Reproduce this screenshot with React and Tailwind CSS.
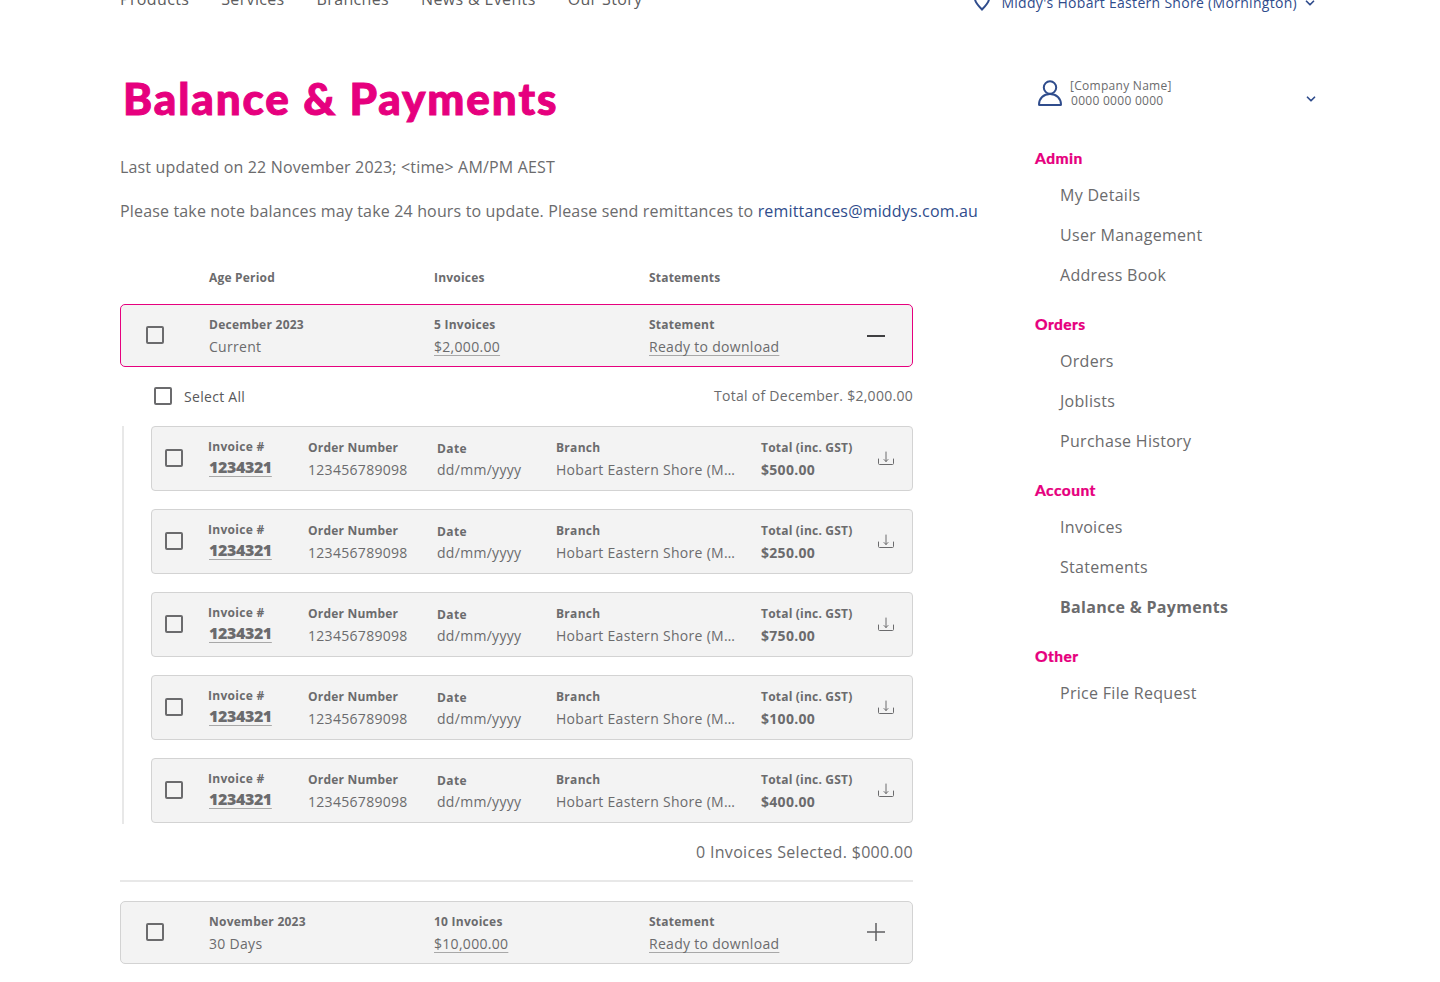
import { ChevronDown } from 'lucide-react';

const invoices = ['$500.00', '$250.00', '$750.00', '$100.00', '$400.00'];

const menu = [
  { title: 'Admin', items: ['My Details', 'User Management', 'Address Book'] },
  { title: 'Orders', items: ['Orders', 'Joblists', 'Purchase History'] },
  { title: 'Account', items: ['Invoices', 'Statements', 'Balance & Payments'] },
  { title: 'Other', items: ['Price File Request'] },
];

function Checkbox() {
  return <span className="block h-[18px] w-[18px] shrink-0 rounded-[2px] border-2 border-[#6b6b6d]" />;
}

function Download() {
  return (
    <svg width="16" height="16" viewBox="0 0 16 16" fill="none" stroke="#6b6b6d" strokeWidth="1" strokeLinecap="round" strokeLinejoin="round">
      <path d="M8 2v9.500M6 9.500l2 2 2-2" />
      <path d="M.5 9v4.500c0 .6.4 1 1 1h13c.6 0 1-.4 1-1V9" />
    </svg>
  );
}

function Linked({ children }) {
  return <span className="underline decoration-[#a8a8a8] underline-offset-[3px] [text-decoration-skip-ink:none]">{children}</span>;
}

function AgeCell({ label, children }) {
  return (
    <div className="mt-[1px]">
      <div className="text-[12px] leading-[18px] font-bold tracking-[0.25px]">{label}</div>
      <div className="mt-[3px] text-[14px] leading-[20px] tracking-[0.3px]">{children}</div>
    </div>
  );
}

function AgeRow({ period, age, count, amount, open }) {
  return (
    <div className={`grid h-[63px] grid-cols-[88px_225px_215px_218px_1fr] items-center rounded-[5px] border bg-[#f3f3f3] ${open ? 'border-[#e6007e]' : 'border-[#d3d3d3]'}`}>
      <div className="-mt-[1px] pl-[25px]"><Checkbox /></div>
      <AgeCell label={period}>{age}</AgeCell>
      <AgeCell label={count}><Linked>{amount}</Linked></AgeCell>
      <AgeCell label="Statement"><Linked>Ready to download</Linked></AgeCell>
      {open ? (
        <svg width="18" height="18" viewBox="0 0 18 18" fill="none" stroke="#3f3f41" strokeWidth="2"><path d="M0 9h18" /></svg>
      ) : (
        <svg width="18" height="18" viewBox="0 0 18 18" fill="none" stroke="#5f5f61" strokeWidth="1.500" className="-mt-[2px]"><path d="M0 9h18M9 0v18" /></svg>
      )}
    </div>
  );
}

function InvoiceCard({ total }) {
  return (
    <div className="grid h-[65px] grid-cols-[56px_100px_129px_119px_205px_117px_1fr] items-center rounded-[4px] border border-[#d3d3d3] bg-[#f3f3f3]">
      <div className="-mt-[1px] pl-[13px]"><Checkbox /></div>
      <div className="-mt-[2px]">
        <div className="text-[12px] leading-[18px] font-bold tracking-[0.3px]">Invoice #</div>
        <div className="mt-[1px] pl-[1px] text-[16px] leading-[20px] font-extrabold tracking-[-0.4px]"><Linked>1234321</Linked></div>
      </div>
      <div className="mt-[2px]">
        <div className="text-[12px] leading-[18px] font-bold tracking-[0.2px]">Order Number</div>
        <div className="mt-[3px] text-[14px] leading-[20px] tracking-[0.3px]">123456789098</div>
      </div>
      <div className="mt-[2px]">
        <div className="mt-[1px] text-[12px] leading-[18px] font-bold tracking-[0.4px]">Date</div>
        <div className="mt-[2px] text-[14px] leading-[20px] tracking-[0.3px]">dd/mm/yyyy</div>
      </div>
      <div className="mt-[2px]">
        <div className="text-[12px] leading-[18px] font-bold tracking-[0.3px]">Branch</div>
        <div className="mt-[3px] w-[183px] truncate text-[14px] leading-[20px] tracking-[0.3px]">Hobart Eastern Shore (Mornington)</div>
      </div>
      <div className="mt-[2px]">
        <div className="text-[12px] leading-[18px] font-bold tracking-[0.2px]">Total (inc. GST)</div>
        <div className="mt-[3px] text-[14px] leading-[20px] font-bold tracking-[0.3px]">{total}</div>
      </div>
      <div className="-mt-[1px]"><Download /></div>
    </div>
  );
}

export default function App() {
  return (
    <div className="h-[982px] overflow-hidden bg-white font-['Open_Sans',sans-serif] text-[#6b6b6d]">
      {/* header, scrolled mostly off the top */}
      <div className="-mt-[11px] flex h-[24px] items-center justify-between pl-[120px] pr-[123px]">
        <nav className="-mt-[4px] flex gap-[32px] text-[16px] leading-[24px] tracking-[0.35px] text-[#5c5c5e]">
          <span>Products</span>
          <span>Services</span>
          <span>Branches</span>
          <span>News &amp; Events</span>
          <span>Our Story</span>
        </nav>
        <div className="flex items-center text-[14px] leading-[24px] tracking-[0.3px] text-[#2f4c8c]">
          <svg width="16" height="20" viewBox="0 0 16 20" fill="none" stroke="#2f4c8c" strokeWidth="2" className="mr-[11px]">
            <path d="M1 8c0-4 3.200-7 7-7s7 3 7 7c0 3.500-4 7.500-7 10.500C5 15.500 1 11.500 1 8Z" />
          </svg>
          <span className="mt-[4px]">Middy's Hobart Eastern Shore (Mornington)</span>
          <ChevronDown size={14} strokeWidth={3} className="mt-[4px] ml-[6px]" />
        </div>
      </div>

      <div className="flex pl-[120px]">
        <main className="w-[793px] shrink-0">
          <h1 className="mt-[58px] pl-[3px] font-['Lato',sans-serif] text-[44px] leading-[54px] font-black tracking-[1.9px] whitespace-nowrap text-[#e6007e] [-webkit-text-stroke:1px_#e6007e]">
            Balance &amp; Payments
          </h1>
          <p className="mt-[31px] text-[16px] leading-[22px] tracking-[0.16px]">Last updated on 22 November 2023; &lt;time&gt; AM/PM AEST</p>
          <p className="mt-[22px] text-[16px] leading-[22px] tracking-[0.16px] whitespace-nowrap">
            Please take note balances may take 24 hours to update. Please send remittances to{' '}
            <span className="text-[#2f4c8c]">remittances@middys.com.au</span>
          </p>

          <div className="mt-[46px] grid h-[20px] grid-cols-[89px_225px_215px_1fr] items-center text-[12px] leading-[18px] font-bold tracking-[0.2px]">
            <span />
            <span>Age Period</span>
            <span>Invoices</span>
            <span>Statements</span>
          </div>

          <div className="mt-[16px]">
            <AgeRow period="December 2023" age="Current" count="5 Invoices" amount="$2,000.00" open />
          </div>

          <div className="mt-[20px] flex h-[18px] items-center pl-[34px]">
            <Checkbox />
            <span className="ml-[12px] text-[14px] tracking-[0.3px] text-[#58585a]">Select All</span>
            <span className="-mt-[2px] ml-auto text-[14px] tracking-[0.28px]">Total of December. $2,000.00</span>
          </div>

          <div className="mt-[21px] ml-[2px] flex flex-col gap-[18px] border-l-2 border-[#e8e8e8] pb-[1px] pl-[27px]">
            {invoices.map((total, i) => (
              <InvoiceCard key={i} total={total} />
            ))}
          </div>

          <div className="mt-[17px] text-right text-[16px] leading-[22px] tracking-[0.32px]">0 Invoices Selected. $000.00</div>
          <div className="mt-[17px] h-[2px] bg-[#e8e8e8]" />
          <div className="mt-[19px]">
            <AgeRow period="November 2023" age="30 Days" count="10 Invoices" amount="$10,000.00" />
          </div>
        </main>

        <aside className="ml-[122px] w-[283px]">
          <div className="mt-[65px] flex items-center pl-[3px]">
            <svg width="24" height="26" viewBox="0 0 24 26" fill="none" stroke="#2f4c8c" strokeWidth="2">
              <circle cx="12" cy="7.500" r="6.200" />
              <path d="M1 24.500c0-6 4.500-10.500 11-10.500s11 4.500 11 10.500c0 .3-.2.5-.5.5h-21c-.3 0-.5-.2-.5-.5Z" />
            </svg>
            <div className="ml-[8px] text-[12px] leading-[15px] tracking-[0.28px]">
              <div>[Company Name]</div>
              <div className="pl-[1px]">0000 0000 0000</div>
            </div>
            <ChevronDown size={14} strokeWidth={3} className="mt-[12px] ml-auto text-[#2f4c8c]" />
          </div>

          <div className="mt-[41px]">
            {menu.map((group) => (
              <div key={group.title} className="mb-[20px]">
                <div className="font-['Lato',sans-serif] text-[15.500px] leading-[18px] font-black tracking-[0.45px] text-[#e6007e] [-webkit-text-stroke:0.2px_#e6007e]">{group.title}</div>
                <ul className="mt-[8px] pl-[25px]">
                  {group.items.map((item) => (
                    <li key={item} className={`h-[40px] text-[16px] leading-[40px] tracking-[0.3px] ${item === 'Balance & Payments' ? 'font-bold' : ''}`}>
                      {item}
                    </li>
                  ))}
                </ul>
              </div>
            ))}
          </div>
        </aside>
      </div>
    </div>
  );
}
